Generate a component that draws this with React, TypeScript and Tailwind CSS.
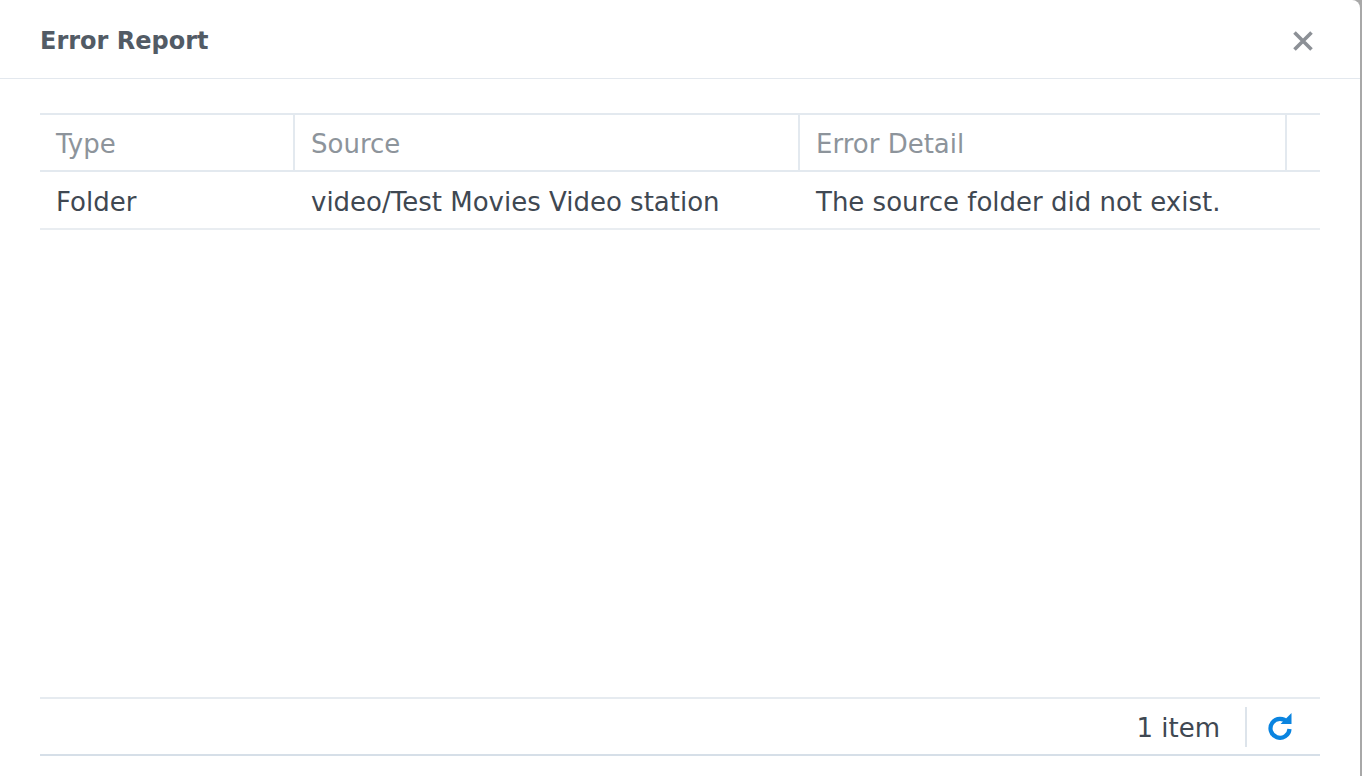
import React from "react";

const font = { fontFamily: '"DejaVu Sans", Verdana, sans-serif' };

export default function App() {
  return (
    <div className="flex h-[776px] w-[1362px] bg-[#a8a8a8]" style={font}>
      <div className="flex h-full w-[1360px] flex-col rounded-tr-[8px] bg-white">
        <div className="flex h-[79px] shrink-0 items-center justify-between border-b border-[#e3e8ee] pl-[40px] pr-[46px] pt-[4px]">
          <div className="text-[24px] font-bold text-[#525b65]">Error Report</div>
          <svg width="22" height="22" viewBox="0 0 22 22">
            <path d="M2.5 2.5 L19.5 19.5 M19.5 2.5 L2.5 19.5" stroke="#8c9096" strokeWidth="3.6" strokeLinecap="butt" />
          </svg>
        </div>
        <div className="flex flex-1 flex-col px-[40px] pb-[20px] pt-[34px]">
          <div className="flex h-[59px] items-center border-y-2 border-[#e3e9ef] text-[26px] text-[#8d949b]">
            <div className="flex h-full w-[255px] items-center border-r-2 border-[#e3e9ef] pl-[16px] pt-[4px]">Type</div>
            <div className="flex h-full w-[505px] items-center border-r-2 border-[#e3e9ef] pl-[16px] pt-[4px]">Source</div>
            <div className="flex h-full w-[487px] items-center border-r-2 border-[#e3e9ef] pl-[16px] pt-[4px]">Error Detail</div>
            <div className="flex-1" />
          </div>
          <div className="flex h-[58px] items-center border-b-2 border-[#e9edf1] pt-[4px] text-[26px] text-[#3f4852]">
            <div className="w-[255px] pl-[16px]">Folder</div>
            <div className="w-[505px] pl-[16px]">video/Test Movies Video station</div>
            <div className="pl-[16px]">The source folder did not exist.</div>
          </div>
          <div className="flex-1" />
          <div className="flex h-[59px] items-center justify-end border-y-2 border-t-[#e6ebf0] border-b-[#d6dfe8] pr-[26px]">
            <span className="pt-[4px] text-[26px] text-[#3f4852]">1 item</span>
            <div className="ml-[25px] h-[40px] w-[2px] bg-[#dde4eb]" />
            <svg className="ml-[19px]" width="28" height="28" viewBox="0 0 28 28">
              <path d="M21.5 9.5 A9.5 9.5 0 1 0 23.5 16" fill="none" stroke="#0a84e0" strokeWidth="4.2" />
              <path d="M14.5 11 L25.5 11 L25.5 0 Z" fill="#0a84e0" />
            </svg>
          </div>
        </div>
      </div>
    </div>
  );
}
